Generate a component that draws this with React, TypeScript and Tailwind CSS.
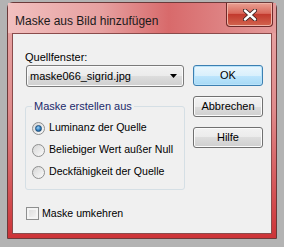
const font = { fontFamily: '"Liberation Sans", Arial, sans-serif' }

function Radio({ label, checked }: { label: string; checked?: boolean }) {
  return (
    <div className="flex h-[22px] items-center gap-[4px] pl-[6px]">
      <span className="flex h-[13px] w-[13px] items-center justify-center rounded-full border border-[#8e8f8f] bg-gradient-to-br from-[#d6d6d6] to-[#fbfbfb]">
        {checked && (
          <span className="h-[7px] w-[7px] rounded-full border border-[#1d4e7a] bg-[radial-gradient(circle_at_40%_35%,#9fd2f5,#2f7ec0_55%,#17466f)]" />
        )}
      </span>
      <span className="text-[10.6px] text-black">{label}</span>
    </div>
  )
}

function Button({ label, focused }: { label: string; focused?: boolean }) {
  return (
    <button
      className={`flex h-[21px] w-[70px] items-center justify-center rounded-[3px] border text-[11px] text-black ${
        focused
          ? 'border-[#3c7fb1] bg-[linear-gradient(#eaf6fd,#d9f0fc_50%,#bee6fd_50%,#a7d9f5)] shadow-[inset_0_0_0_1px_#b9e3fa]'
          : 'border-[#707070] bg-[linear-gradient(#f2f2f2,#ebebeb_50%,#dddddd_50%,#cfcfcf)] shadow-[inset_0_0_0_1px_#fbfbfb]'
      }`}
    >
      {label}
    </button>
  )
}

export default function App() {
  return (
    <div className="h-[247px] w-[284px] overflow-hidden bg-[#b3b3b3] pl-[7px] pt-[2px]" style={font}>
      <div className="flex h-[237px] w-[270px] flex-col rounded-t-[6px] border border-[#6b3a3a] bg-[linear-gradient(#e9a9a8,#df8b8c_45%,#cd3337)]">
        {/* Title bar */}
        <div className="flex h-[30px] items-start justify-between bg-[linear-gradient(90deg,#f2c0bf,#e6a0a0_35%,#d86a6b_60%,#e39a9a)] pl-[7px] pr-[3px]">
          <span className="pt-[11px] text-[12px] leading-[14px] text-[#1a1a1a]">Maske aus Bild hinzufügen</span>
          <div className="flex h-[24px] w-[47px] items-center justify-center rounded-b-[4px] border border-t-0 border-[#6e2a2a] bg-[linear-gradient(#eaa093,#d9695c_45%,#c23a2e_50%,#d2654f)] shadow-[inset_0_0_0_1px_#f0b4a8]">
            <svg width="14" height="12" viewBox="0 0 14 12">
              <path d="M2 1.5 L12 10.5 M12 1.5 L2 10.5" stroke="#3b2323" strokeWidth="4.2" strokeLinecap="round" />
              <path d="M2 1.5 L12 10.5 M12 1.5 L2 10.5" stroke="#ffffff" strokeWidth="2.4" strokeLinecap="round" />
            </svg>
          </div>
        </div>

        {/* Client area */}
        <div className="mx-[4px] mb-[4px] flex flex-1 border border-[#8a4b4b] bg-[#f0f0f0] pl-[12px] pr-[8px] pt-[16px]">
          <div className="flex w-[161px] flex-col">
            <span className="text-[11px] leading-[14px] text-black">Quellfenster:</span>
            <div className="ml-[1px] mt-[1px] flex h-[22px] w-[158px] items-center justify-between rounded-[3px] border border-[#7a7a7a] bg-[linear-gradient(#f2f2f2,#ebebeb_50%,#dddddd_50%,#cfcfcf)] pl-[3px] pr-[6px] shadow-[inset_0_0_0_1px_#fafafa]">
              <span className="text-[11px] text-black">maske066_sigrid.jpg</span>
              <svg width="7" height="4" viewBox="0 0 7 4">
                <path d="M0 0 H7 L3.5 4 Z" fill="#000" />
              </svg>
            </div>

            <fieldset className="mt-[12px] h-[91px] rounded-[3px] border border-[#d5dfe5] pt-[4px]">
              <legend className="ml-[6px] px-[2px] text-[11px] leading-[14px] text-[#1b2a6b]">Maske erstellen aus</legend>
              <Radio label="Luminanz der Quelle" checked />
              <Radio label="Beliebiger Wert außer Null" />
              <Radio label="Deckfähigkeit der Quelle" />
            </fieldset>

            <div className="ml-[1px] mt-[16px] flex items-center gap-[3px]">
              <span className="h-[13px] w-[13px] border border-[#8e8f8f] bg-[linear-gradient(135deg,#d9d9d9,#f7f7f7)] shadow-[inset_0_0_0_2px_#f4f4f4]" />
              <span className="text-[10.6px] text-black">Maske umkehren</span>
            </div>
          </div>

          <div className="ml-[8px] flex flex-col gap-[10px] pt-[15px]">
            <Button label="OK" focused />
            <Button label="Abbrechen" />
            <Button label="Hilfe" />
          </div>
        </div>
      </div>
    </div>
  )
}
